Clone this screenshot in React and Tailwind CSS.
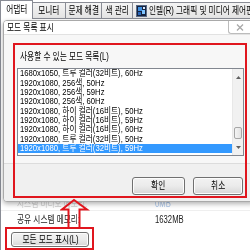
import React from 'react'

// squeezed text: the screenshot's glyphs are narrower than any installed face
function Sq({ children, className = '' }) {
  return <span className={`inline-block whitespace-nowrap scale-x-[0.77] ${className}`}>{children}</span>
}

const modes = [
  '1680x1050, 트루 컬러(32비트), 60Hz',
  '1920x1080, 256색, 50Hz',
  '1920x1080, 256색, 59Hz',
  '1920x1080, 256색, 60Hz',
  '1920x1080, 하이 컬러(16비트), 50Hz',
  '1920x1080, 하이 컬러(16비트), 59Hz',
  '1920x1080, 하이 컬러(16비트), 60Hz',
  '1920x1080, 트루 컬러(32비트), 50Hz',
  '1920x1080, 트루 컬러(32비트), 59Hz',
]

function Tab({ label, w }) {
  return (
    <div className={`flex h-[17px] items-center justify-center border-r border-t border-b border-[#898c95] bg-gradient-to-b from-[#f4f4f4] to-[#e3e3e3] ${w}`}>
      <Sq className="origin-center">{label}</Sq>
    </div>
  )
}

function WinButton({ children, className = '' }) {
  return (
    <div className={`flex items-center justify-center rounded-[3px] border border-[#707070] bg-gradient-to-b from-[#f2f2f2] via-[#ebebeb] to-[#d6d6d6] shadow-[inset_0_0_0_1px_#fcfcfc] ${className}`}>
      <Sq className="origin-center">{children}</Sq>
    </div>
  )
}

export default function App() {
  return (
    <div className="relative h-[250px] w-[250px] overflow-hidden bg-white font-['Liberation_Sans','Noto_Sans_CJK_KR',sans-serif] text-[10px] leading-none text-black">
      {/* tab strip */}
      <div className="flex h-[19px] items-end bg-white">
        <div className="z-10 flex h-[19px] w-[33px] shrink-0 items-center justify-center border-l border-r border-t border-[#898c95] bg-white">
          <Sq className="origin-center">어댑터</Sq>
        </div>
        <Tab label="모니터" w="w-[33px] shrink-0" />
        <Tab label="문제 해결" w="w-[36px] shrink-0" />
        <Tab label="색 관리" w="w-[31px] shrink-0" />
        <div className="flex h-[17px] flex-1 items-center gap-[2px] overflow-hidden border-t border-b border-[#898c95] bg-gradient-to-b from-[#f4f4f4] to-[#e3e3e3] pl-[3px]">
          <svg width="11" height="12" viewBox="0 0 11 12" className="shrink-0">
            <rect x="0.5" y="0.5" width="10" height="11" fill="#15233f" stroke="#5a6a86" />
            <rect x="2" y="2" width="4" height="4" fill="#3f8fe0" />
            <rect x="6" y="5" width="3" height="4" fill="#7fc4ff" />
            <rect x="2" y="7" width="3" height="3" fill="#2a66b8" />
            <rect x="7" y="2" width="2" height="2" fill="#d8e8ff" />
          </svg>
          <Sq className="origin-left">인텔(R) 그래픽 및 미디어 제어판</Sq>
        </div>
      </div>

      {/* tab page */}
      <div className="flex h-[231px] flex-col border-l border-[#898c95]">
        {/* dialog window */}
        <div className="relative z-10 ml-[2px] mt-[1px] flex h-[182px] w-[252px] shrink-0 flex-col overflow-hidden rounded-[4px] border border-[#a9a9a9] bg-white shadow-[0_2px_5px_rgba(0,0,0,0.3)]">
          <div className="flex h-[14px] shrink-0 items-center border-b border-[#e2e2e2] bg-white pl-[3px]">
            <Sq className="origin-left scale-x-[0.9]">모드 목록 표시</Sq>
            <div className="ml-auto mr-[3px] flex h-[13px] w-[23px] items-center justify-center self-start rounded-bl-[3px] border-b border-l border-[#bcbcbc] bg-white">
              <svg width="8" height="7" viewBox="0 0 8 7">
                <path d="M1 0.5 L7 6.5 M7 0.5 L1 6.5" stroke="#a8a8a8" strokeWidth="1.3" fill="none" />
              </svg>
            </div>
          </div>

          <div className="flex h-[128px] shrink-0 flex-col bg-[#f7f7f7] pt-[16px]">
            <div className="h-[11px] pl-[16px] leading-[11px]">
              <Sq className="origin-left">사용할 수 있는 모드 목록(L)</Sq>
            </div>
            <div className="ml-[13px] mt-[6px] flex h-[88px] w-[227px] border border-[#828790] bg-white">
              <div className="flex-1 overflow-hidden text-[9px]">
                {modes.map((m, i) => {
                  const sel = i === modes.length - 1
                  return (
                    <div
                      key={m}
                      className={`flex h-[9.375px] items-center pl-[2px] leading-[9px] ${sel ? 'bg-[#3399ff] text-white' : ''}`}
                    >
                      <span className="inline-block origin-left scale-x-[0.855] whitespace-nowrap">{m}</span>
                    </div>
                  )
                })}
              </div>
              <div className="flex w-[11px] flex-col border-l border-[#e8e8e8] bg-[#f1f1f1]">
                <div className="flex h-[16px] items-center justify-center">
                  <svg width="5" height="3" viewBox="0 0 5 3"><path d="M0 3 L2.5 0 L5 3 Z" fill="#606060" /></svg>
                </div>
                <div className="h-[42px]" />
                <div className="mx-[1px] h-[12px] rounded-[2px] border border-[#a6a6a6] bg-gradient-to-r from-[#f4f4f4] to-[#e2e2e2]" />
                <div className="flex flex-1 items-center justify-center">
                  <svg width="5" height="3" viewBox="0 0 5 3"><path d="M0 0 L2.5 3 L5 0 Z" fill="#606060" /></svg>
                </div>
              </div>
            </div>
          </div>

          <div className="flex flex-1 gap-[8px] border-t border-[#dcdcdc] bg-[#f0f0f0] pl-[128px] pt-[13px]">
            <WinButton className="h-[18px] w-[53px]">확인</WinButton>
            <WinButton className="h-[18px] w-[50px]">취소</WinButton>
          </div>
        </div>

        {/* underlying property rows, the first one half hidden under the dialog */}
        <div className="-mt-[4px] flex h-[13px] shrink-0 items-center border-b border-[#efefef] pl-[16px] text-[#cfcfcf] blur-[0.6px]">
          <div className="w-[138px]"><Sq className="origin-left">시스템 비디오 메모리:</Sq></div>
          <Sq className="origin-left text-[#a9c4e8]">0MB</Sq>
        </div>
        <div className="mt-[4px] flex h-[10px] items-center pl-[16px] text-[#222]">
          <div className="w-[138px]"><Sq className="origin-left">공유 시스템 메모리:</Sq></div>
          <Sq className="origin-left">1632MB</Sq>
        </div>
        <div className="ml-[10px] mt-[7px]">
          <WinButton className="h-[15px] w-[78px]">모든 모드 표시(L)</WinButton>
        </div>
      </div>

      {/* red annotation marks drawn over the screenshot */}
      <div className="pointer-events-none absolute left-[13px] top-[43px] z-20 h-[155px] w-[234px] border-2 border-[#e0161e]" />
      <div className="pointer-events-none absolute left-[5px] top-[227px] z-20 h-[23px] w-[89px] border-2 border-[#e0161e]" />
      <svg className="pointer-events-none absolute left-[60px] top-[197px] z-20" width="30" height="32" viewBox="0 0 30 32">
        <path d="M14 3 L2 12.5 L8.5 12.5 L8.5 31 L19.5 31 L19.5 12.5 L27 12.5 Z" fill="none" stroke="#e0161e" strokeWidth="2" strokeLinejoin="miter" />
      </svg>
    </div>
  )
}
